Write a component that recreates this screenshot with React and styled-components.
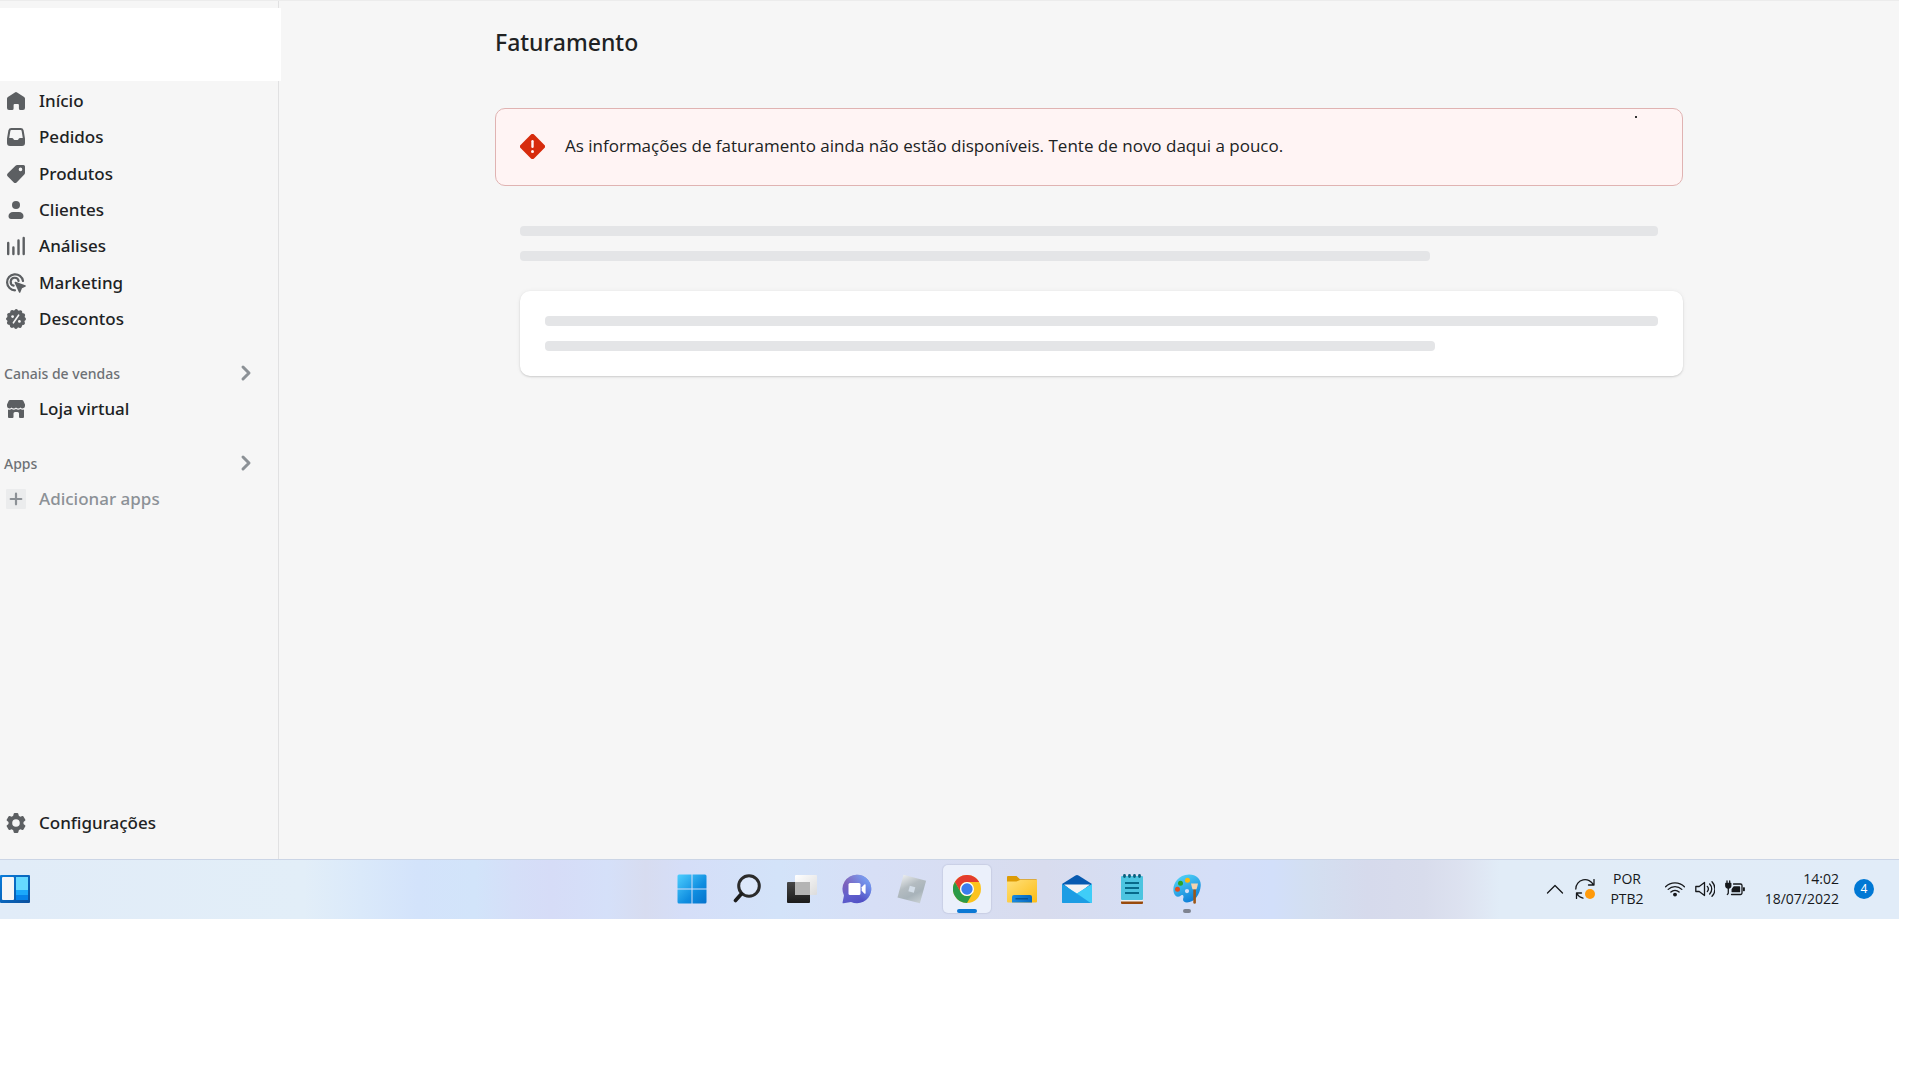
import React from 'react';
import styled, { createGlobalStyle } from 'styled-components';

const App = () => {
    return (
        <>
            <GlobalStyle />
            <Screen>
                <Desktop>
                    <Admin>
                        <Sidebar>
                            <StoreSwitcher />
                            <MainNav>
                                {MAIN_LINKS.map(({ label, icon: Icon }) => (
                                    <NavLink href="#" key={label}>
                                        <Icon />
                                        {label}
                                    </NavLink>
                                ))}
                            </MainNav>
                            <NavSection>
                                <SectionButton type="button">
                                    Canais de vendas
                                    <ChevronIcon />
                                </SectionButton>
                                <NavLink href="#">
                                    <StoreIcon />
                                    Loja virtual
                                </NavLink>
                            </NavSection>
                            <NavSection>
                                <SectionButton type="button">
                                    Apps
                                    <ChevronIcon />
                                </SectionButton>
                                <NavLink href="#" $muted>
                                    <PlusIcon />
                                    Adicionar apps
                                </NavLink>
                            </NavSection>
                            <SidebarFooter>
                                <NavLink href="#">
                                    <GearIcon />
                                    Configurações
                                </NavLink>
                            </SidebarFooter>
                        </Sidebar>
                        <Content>
                            <Page>
                                <PageTitle>Faturamento</PageTitle>
                                <Banner role="alert">
                                    <AlertIcon />
                                    <BannerText>
                                        As informações de faturamento ainda não estão disponíveis. Tente de novo daqui a pouco.
                                    </BannerText>
                                </Banner>
                                <SkeletonBody>
                                    <SkeletonText>
                                        <SkeletonLine />
                                        <SkeletonLine $short />
                                    </SkeletonText>
                                    <SkeletonCard>
                                        <SkeletonLine />
                                        <SkeletonLine $short />
                                    </SkeletonCard>
                                </SkeletonBody>
                            </Page>
                        </Content>
                    </Admin>
                    <Taskbar>
                        <WidgetButton type="button" aria-label="Widgets">
                            <WidgetsIcon />
                        </WidgetButton>
                        <TaskbarApps>
                            {TASKBAR_APPS.map(({ label, icon: Icon, active, open }) => (
                                <AppButton type="button" key={label} aria-label={label} $active={active}>
                                    <Icon />
                                    {(active || open) && <Indicator $active={active} />}
                                </AppButton>
                            ))}
                        </TaskbarApps>
                        <Tray>
                            <TrayButton type="button" aria-label="Ícones ocultos">
                                <TrayChevron />
                            </TrayButton>
                            <TrayButton type="button" aria-label="Atualização">
                                <UpdateIcon />
                            </TrayButton>
                            <Language type="button">
                                <span>POR</span>
                                <span>PTB2</span>
                            </Language>
                            <TrayButton type="button" aria-label="Rede">
                                <WifiIcon />
                            </TrayButton>
                            <TrayButton type="button" aria-label="Volume">
                                <VolumeIcon />
                            </TrayButton>
                            <TrayButton type="button" aria-label="Bateria">
                                <BatteryIcon />
                            </TrayButton>
                            <Clock type="button">
                                <span>14:02</span>
                                <span>18/07/2022</span>
                            </Clock>
                            <Notifications type="button">4</Notifications>
                        </Tray>
                    </Taskbar>
                </Desktop>
            </Screen>
        </>
    );
};

export default App;

// 사이드바 아이콘
const HomeIcon = () => (
    <Icon20 viewBox="0 0 20 20">
        <path d="M19 7.6V17a2 2 0 0 1-2 2h-2.6a1.5 1.5 0 0 1-1.5-1.5V14a1 1 0 0 0-1-1H8.6a1 1 0 0 0-1 1v3.5A1.5 1.5 0 0 1 6.1 19H3a2 2 0 0 1-2-2V7.6a2 2 0 0 1 .9-1.6l7-4.6a2 2 0 0 1 2.2 0l7 4.6A2 2 0 0 1 19 7.6z" />
    </Icon20>
);

const OrdersIcon = () => (
    <Icon20 viewBox="0 0 20 20">
        <path fillRule="evenodd" d="M5.3 1h9.4a3 3 0 0 1 2.9 2.3l1.3 7.7q.1.5.1 1V16a3 3 0 0 1-3 3H4a3 3 0 0 1-3-3v-4q0-.5.1-1l1.3-7.7A3 3 0 0 1 5.3 1zM5.4 3a1 1 0 0 0-1 .8L3.2 11H6a1.5 1.5 0 0 1 1.3.8l.3.5a1 1 0 0 0 .9.7h3a1 1 0 0 0 .9-.7l.3-.5A1.5 1.5 0 0 1 14 11h2.8l-1.2-7.2a1 1 0 0 0-1-.8z" />
    </Icon20>
);

const ProductsIcon = () => (
    <Icon20 viewBox="0 0 20 20">
        <path fillRule="evenodd" d="M11.2 1H17.5A1.5 1.5 0 0 1 19 2.5V8.8a2.5 2.5 0 0 1-.7 1.7l-7.7 7.9a2 2 0 0 1-2.8 0l-6.2-6.2a2 2 0 0 1 0-2.8l7.9-7.7A2.5 2.5 0 0 1 11.2 1zM14.5 7.2a1.8 1.8 0 1 0 0-3.6 1.8 1.8 0 0 0 0 3.6z" />
    </Icon20>
);

const CustomersIcon = () => (
    <Icon20 viewBox="0 0 20 20">
        <circle cx="10" cy="5" r="4" />
        <path d="M7 12h6c2.6 0 4.5 1.7 4.5 4 0 1.8-1 3-2.5 3H5c-1.5 0-2.5-1.2-2.5-3 0-2.3 1.9-4 4.5-4z" />
    </Icon20>
);

const AnalyticsIcon = () => (
    <Icon20 viewBox="0 0 20 20">
        <path d="M2.2 7v11M7.4 11.5V18M12.5 4.5V18M17.7 2v16" fill="none" stroke="currentColor" strokeWidth="2.4" strokeLinecap="round" />
    </Icon20>
);

const MarketingIcon = () => (
    <Icon20 viewBox="0 0 20 20">
        <path d="M9 17.3A8 8 0 1 1 17 8" fill="none" stroke="currentColor" strokeWidth="2.2" strokeLinecap="round" />
        <path d="M7.6 12.6A4 4 0 1 1 12.6 8" fill="none" stroke="currentColor" strokeWidth="2.2" strokeLinecap="round" />
        <path d="M9.6 8.8l9.7 3.4a.8.8 0 0 1 0 1.5l-3.3 1.5-1.6 4a.8.8 0 0 1-1.5 0L8.6 9.8a.8.8 0 0 1 1-1z" />
    </Icon20>
);

const DiscountsIcon = () => (
    <Icon20 viewBox="0 0 20 20">
        <circle cx="10" cy="10" r="9" />
        <circle cx="10" cy="10" r="8.3" fill="none" stroke="currentColor" strokeWidth="3.4" strokeLinecap="round" strokeDasharray="0.01 4.336" />
        <path d="M7.4 13.8l5.2-7.6" stroke="#f6f6f6" strokeWidth="1.6" strokeLinecap="round" />
        <circle cx="6.6" cy="7.6" r="1.4" fill="#f6f6f6" />
        <circle cx="13.4" cy="12.4" r="1.4" fill="#f6f6f6" />
    </Icon20>
);

const StoreIcon = () => (
    <Icon20 viewBox="0 0 20 20">
        <path d="M4 1h12a1.5 1.5 0 0 1 1.3.8L19 5.5V7a2.5 2.5 0 0 1-4.5 1.5 3 3 0 0 1-4.5 0 3 3 0 0 1-4.5 0A2.5 2.5 0 0 1 1 7V5.5l1.7-3.7A1.5 1.5 0 0 1 4 1z" />
        <path d="M2 10.5q2 .8 3.6-.4 2.2 1.5 4.4 0 2.2 1.5 4.4 0 1.6 1.2 3.6.4V18a1 1 0 0 1-1 1h-3a1 1 0 0 1-1-1v-3.5a1.5 1.5 0 0 0-1.500-1.5h-2.500A1.5 1.5 0 0 0 7.500 14.500V18a1 1 0 0 1-1 1H3a1 1 0 0 1-1-1z" />
    </Icon20>
);

const PlusIcon = () => (
    <Icon20 viewBox="0 0 20 20">
        <rect width="20" height="20" rx="1" fill="#ebeced" />
        <path d="M10 4.700v10.600M4.700 10h10.600" stroke="currentColor" strokeWidth="2.2" strokeLinecap="round" />
    </Icon20>
);

const GearIcon = () => (
    <Icon20 viewBox="0 0 20 20">
        <path fillRule="evenodd" d="M8.7 0h2.6a1 1 0 0 1 1 .8l.5 2 1.5.9 2-.6a1 1 0 0 1 1.2.4l1.700 2.900a1 1 0 0 1-.2 1.300L17.500 9.100v1.800l1.500 1.400a1 1 0 0 1 .2 1.300l-1.700 2.900a1 1 0 0 1-1.200.4l-2-.6-1.500.9-.5 2a1 1 0 0 1-1 .8H8.700a1 1 0 0 1-1-.8l-.5-2-1.500-.9-2 .6a1 1 0 0 1-1.200-.4L.8 13.600a1 1 0 0 1 .2-1.300l1.500-1.400V9.100L1 7.700a1 1 0 0 1-.2-1.300l1.700-2.900a1 1 0 0 1 1.200-.4l2 .6 1.500-.9.5-2a1 1 0 0 1 1-.8zM10 13.800a3.8 3.8 0 1 0 0-7.600 3.8 3.8 0 0 0 0 7.600z" />
    </Icon20>
);

const ChevronIcon = () => (
    <svg width="12" height="18" viewBox="0 0 12 18" fill="none" stroke="#8c9196" strokeWidth="3" strokeLinecap="round" strokeLinejoin="round" aria-hidden="true">
        <path d="M3 3l6 6-6 6" />
    </svg>
);

const AlertIcon = () => (
    <svg width="25" height="25" viewBox="0 0 25 25" aria-hidden="true">
        <path d="M10.7.8a2.5 2.5 0 0 1 3.6 0l9.9 9.900a2.5 2.5 0 0 1 0 3.600l-9.900 9.900a2.5 2.5 0 0 1-3.600 0L.8 14.300a2.5 2.5 0 0 1 0-3.600z" fill="#d72c0d" />
        <path d="M12.5 7.3v5.4" stroke="#fff4f4" strokeWidth="2.4" strokeLinecap="round" />
        <circle cx="12.5" cy="17.5" r="1.5" fill="#fff4f4" />
    </svg>
);

// 작업 표시줄 아이콘
const WidgetsIcon = () => (
    <svg width="30" height="28" viewBox="0 0 30 28" aria-hidden="true">
        <defs>
            <linearGradient id="widgetFrame" x1="0" y1="0" x2="1" y2="1">
                <stop offset="0" stopColor="#0a7ddb" />
                <stop offset="1" stopColor="#0a4f9c" />
            </linearGradient>
        </defs>
        <rect width="30" height="28" rx="1" fill="url(#widgetFrame)" />
        <rect x="2" y="2" width="12" height="23" rx="1" fill="#f6f6f6" />
        <rect x="16" y="2" width="12" height="13" fill="#66d9ff" />
        <rect x="16" y="15" width="12" height="5" fill="#1ba8fb" />
        <rect x="16" y="20" width="12" height="5" fill="#0683ea" />
    </svg>
);

const WindowsIcon = () => (
    <svg width="30" height="30" viewBox="0 0 30 30" aria-hidden="true">
        <defs>
            <linearGradient id="winTile" x1="0" y1="0" x2="30" y2="30" gradientUnits="userSpaceOnUse">
                <stop offset="0" stopColor="#4fd0ff" />
                <stop offset="0.6" stopColor="#0f8de0" />
                <stop offset="1" stopColor="#0471cb" />
            </linearGradient>
        </defs>
        <path d="M2 .5h12.500v14H.5V2A1.500 1.500 0 0 1 2 .5zM15.500.5H28A1.500 1.500 0 0 1 29.500 2v12.500h-14zM.5 15.500h14v14H2A1.500 1.500 0 0 1 .5 28zM15.500 15.500h14V28a1.500 1.500 0 0 1-1.500 1.500H15.500z" fill="url(#winTile)" />
    </svg>
);

const SearchIcon = () => (
    <svg width="28" height="30" viewBox="0 0 28 30" fill="none" strokeLinecap="round" aria-hidden="true">
        <circle cx="16" cy="12" r="10.3" fill="#e3ecfc" fillOpacity="0.6" stroke="#2b2b2b" strokeWidth="3" />
        <path d="M8.5 19.8L2.5 26.5" stroke="#1c1c1c" strokeWidth="3.6" />
    </svg>
);

const TaskViewIcon = () => (
    <svg width="30" height="30" viewBox="0 0 30 30" aria-hidden="true">
        <defs>
            <linearGradient id="taskBack" x1="0" y1="0" x2="0" y2="1">
                <stop offset="0" stopColor="#474747" />
                <stop offset="1" stopColor="#1b1b1b" />
            </linearGradient>
            <linearGradient id="taskFront" x1="0" y1="0" x2="1" y2="1">
                <stop offset="0" stopColor="#ffffff" />
                <stop offset="1" stopColor="#dcdcdc" />
            </linearGradient>
        </defs>
        <rect y="8" width="23" height="21" rx="1" fill="url(#taskBack)" />
        <rect x="8" y="1" width="22" height="20" rx="1" fill="url(#taskFront)" />
        <path d="M8 8h15v13H9a1 1 0 0 1-1-1z" fill="#b4b4b4" />
    </svg>
);

const ChatIcon = () => (
    <svg width="30" height="30" viewBox="0 0 30 30" aria-hidden="true">
        <defs>
            <linearGradient id="chatBubble" x1="0.2" y1="0.1" x2="0.7" y2="1">
                <stop offset="0" stopColor="#8661b5" />
                <stop offset="0.5" stopColor="#6361cd" />
                <stop offset="1" stopColor="#4f4fc4" />
            </linearGradient>
            <linearGradient id="chatShine" x1="1" y1="0" x2="0.4" y2="0.6">
                <stop offset="0" stopColor="#7ab0ff" />
                <stop offset="1" stopColor="#7ab0ff" stopOpacity="0" />
            </linearGradient>
        </defs>
        <path d="M15 .7a14.3 14.3 0 1 1-6 27.300L1.500 29.200a.8.8 0 0 1-.9-1L2 21.500A14.3 14.3 0 0 1 15 .7z" fill="url(#chatBubble)" />
        <path d="M15 .7a14.3 14.3 0 1 1-6 27.300L1.500 29.200a.8.8 0 0 1-.9-1L2 21.500A14.3 14.3 0 0 1 15 .7z" fill="url(#chatShine)" />
        <rect x="6.5" y="9" width="12" height="12" rx="1.5" fill="#fff" />
        <path d="M19.7 13.2l2.6-2.7q1.3-.9 1.3.6v7.8q0 1.5-1.3.6l-2.6-2.7z" fill="#fff" />
    </svg>
);

const RobloxIcon = () => (
    <svg width="30" height="30" viewBox="0 0 30 30" aria-hidden="true">
        <defs>
            <linearGradient id="robloxTile" x1="0.2" y1="0" x2="0.7" y2="1">
                <stop offset="0" stopColor="#eceeef" />
                <stop offset="0.4" stopColor="#b4bcc1" />
                <stop offset="0.7" stopColor="#a8b3ba" />
                <stop offset="1" stopColor="#c6ced2" />
            </linearGradient>
        </defs>
        <path d="M6.5.7l22.6 6.1-6.2 22.5L.5 23.4z" fill="url(#robloxTile)" />
        <path d="M12.8 11.8l5.5 1.5-1.5 5.4-5.4-1.5z" fill="#d3dde8" />
    </svg>
);

const ChromeIcon = () => (
    <svg width="28" height="28" viewBox="0 0 48 48" aria-hidden="true">
        <circle cx="24" cy="24" r="24" fill="#fcc31e" />
        <path d="M3.2 12A24 24 0 0 1 44.8 12H24a12 12 0 0 0-10.4 18z" fill="#e33b2e" />
        <path d="M3.2 12l10.4 18A12 12 0 0 0 34.4 30L24 48A24 24 0 0 1 3.2 12z" fill="#2a9a48" />
        <circle cx="24" cy="24" r="12" fill="#fff" />
        <circle cx="24" cy="24" r="9.7" fill="#3b7ded" />
    </svg>
);

const FolderIcon = () => (
    <svg width="30" height="28" viewBox="0 0 30 28" aria-hidden="true">
        <defs>
            <linearGradient id="folderFront" x1="0" y1="0" x2="1" y2="1">
                <stop offset="0" stopColor="#ffe07a" />
                <stop offset="1" stopColor="#fcbc14" />
            </linearGradient>
            <linearGradient id="folderDock" x1="0" y1="0" x2="1" y2="0">
                <stop offset="0" stopColor="#1b8ae0" />
                <stop offset="1" stopColor="#0668bd" />
            </linearGradient>
        </defs>
        <path d="M1 1h8.5L13 4.2H29q1 0 1 1V10H0V2q0-1 1-1z" fill="#dd9b05" />
        <path d="M0 6.5h9.5L13 5h17v21.5q0 1-1 1H1q-1 0-1-1z" fill="url(#folderFront)" />
        <path d="M5 27.5V22q0-2 2-2h16q2 0 2 2v5.5z" fill="url(#folderDock)" />
        <path d="M8.5 23.8h12.5" stroke="#064a87" strokeWidth="1.2" />
    </svg>
);

const MailIcon = () => (
    <svg width="30" height="28" viewBox="0 0 30 28" aria-hidden="true">
        <path d="M0 9L13.5.5q1.5-.8 3 0L30 9v6H0z" fill="#075ab0" />
        <path d="M2 9.5h26L15 20z" fill="#f4f4f5" />
        <path d="M0 9l15 9.5L30 9v18q0 1-1 1H1q-1 0-1-1z" fill="#29b4f0" />
        <path d="M30 9L15 18.5 28.5 28q1.5 0 1.5-1.5z" fill="#3fcdf8" />
        <path d="M0 9v18q0 1 1 1h27.5z" fill="#1c9de4" />
    </svg>
);

const NotepadIcon = () => (
    <svg width="22" height="30" viewBox="0 0 22 30" aria-hidden="true">
        <path d="M0 26h22v3a1 1 0 0 1-1 1H1a1 1 0 0 1-1-1z" fill="#994a0c" />
        <rect y="24" width="22" height="3.5" fill="#eeeff0" />
        <rect y="2" width="22" height="24" rx="1" fill="#4cc4e0" />
        <path d="M4 9h14M4 14h14M4 19h14" stroke="#076a8a" strokeWidth="2" />
        <path d="M3.5 1.5v1M8.5 1.5v1M13.5 1.5v1M18.5 1.5v1" stroke="#0b5e7c" strokeWidth="2.8" strokeLinecap="round" />
    </svg>
);

const PaintIcon = () => (
    <svg width="30" height="30" viewBox="0 0 30 30" aria-hidden="true">
        <defs>
            <linearGradient id="palette" x1="0.2" y1="0" x2="0.7" y2="1">
                <stop offset="0" stopColor="#53d6f8" />
                <stop offset="1" stopColor="#0b7ad6" />
            </linearGradient>
        </defs>
        <path d="M17 .6C25 .6 29.3 5.5 28.7 12c-.6 8-6 16.5-13.7 16.5-3.6 0-4.5-2-3.7-4.5.7-2.6-.5-3.7-2.3-2.6-2 1.4-3.8 2-5.7 0C-1.5 16 2.5 1 17 .6zM15 15a2.1 2.1 0 1 0 0 4.2A2.1 2.1 0 0 0 15 15z" fill="url(#palette)" fillRule="evenodd" />
        <circle cx="15.5" cy="6.3" r="2.5" fill="#fcb90a" />
        <circle cx="8.5" cy="9.3" r="2.5" fill="#2ba526" />
        <circle cx="5.5" cy="15.3" r="2.5" fill="#e04d1c" />
        <path d="M19 9.5h7l-.8 3.5q-.4 2-1.2 2.5h-3q-.8-.5-1.2-2.5z" fill="#f3d3ae" />
        <path d="M21.3 15.5h2.6v13a1.3 1.3 0 0 1-2.6 0z" fill="#9c5718" />
    </svg>
);

const TASKBAR_APPS = [
    { label: 'Iniciar', icon: WindowsIcon },
    { label: 'Pesquisar', icon: SearchIcon },
    { label: 'Visão de tarefas', icon: TaskViewIcon },
    { label: 'Chat', icon: ChatIcon },
    { label: 'Roblox', icon: RobloxIcon },
    { label: 'Google Chrome', icon: ChromeIcon, active: true },
    { label: 'Explorador de Arquivos', icon: FolderIcon },
    { label: 'Email', icon: MailIcon },
    { label: 'Bloco de Notas', icon: NotepadIcon },
    { label: 'Paint', icon: PaintIcon, open: true },
];

const TrayChevron = () => (
    <TrayIcon viewBox="0 0 20 20">
        <path d="M2.5 14L10 6.5l7.5 7.5" />
    </TrayIcon>
);

const UpdateIcon = () => (
    <TrayIcon viewBox="0 0 20 20">
        <path d="M.8 10A9.3 9.3 0 0 1 18.5 6M19 .5V6h-5.5M8 19.2A9.3 9.3 0 0 1 1.8 14.5M6.5 14H1.5v5.5" />
        <circle cx="15" cy="15" r="5" fill="#ff9a0a" stroke="none" />
    </TrayIcon>
);

const WifiIcon = () => (
    <TrayIcon viewBox="0 0 20 20">
        <path d="M.6 7.8a13.2 13.2 0 0 1 18.8 0M3.2 10.4a9.6 9.6 0 0 1 13.6 0M5.9 13a5.8 5.8 0 0 1 8.2 0" />
        <circle cx="10" cy="15.6" r="1.3" fill="#16181b" />
    </TrayIcon>
);

const VolumeIcon = () => (
    <TrayIcon viewBox="0 0 20 20">
        <path d="M.8 7.5h3.4L9.5 3.5v13l-5.3-4H.8zM12.3 7.4a4 4 0 0 1 0 5.2M14.7 5a7.2 7.2 0 0 1 0 10M17 2.7a10.5 10.5 0 0 1 0 14.6" />
    </TrayIcon>
);

const BatteryIcon = () => (
    <TrayIcon viewBox="0 0 20 20">
        <path d="M8.5 5H15.5a1.5 1.5 0 0 1 1.5 1.5v7.5a1.5 1.5 0 0 1-1.5 1.5H6.5" />
        <path d="M9 8h5.5v4.7H7.2v-2.2z" fill="#16181b" />
        <path d="M18.6 8.8h.6v2.8h-.6z" fill="#16181b" />
        <path d="M.8 4.500h5v2a2.5 2.5 0 0 1-5 0z" fill="#16181b" />
        <path d="M2 4.5V2M4.7 4.5V2M3.3 9v4.5a2 2 0 0 1-1 2" />
    </TrayIcon>
);

const MAIN_LINKS = [
    { label: 'Início', icon: HomeIcon },
    { label: 'Pedidos', icon: OrdersIcon },
    { label: 'Produtos', icon: ProductsIcon },
    { label: 'Clientes', icon: CustomersIcon },
    { label: 'Análises', icon: AnalyticsIcon },
    { label: 'Marketing', icon: MarketingIcon },
    { label: 'Descontos', icon: DiscountsIcon },
];

const GlobalStyle = createGlobalStyle`
  body {
    margin: 0;
    background-color: #ffffff;
    color: #202223;
    font-family: 'Noto Sans', 'Open Sans', sans-serif;
  }

  button {
    padding: 0;
    border: none;
    background: none;
    color: inherit;
    font-family: inherit;
    cursor: pointer;
  }
`;

const Screen = styled.div`
  display: flex;
  flex-direction: column;
  min-height: 100vh;
  padding: 0 21px 161px 0;
  box-sizing: border-box;
`;

const Desktop = styled.div`
  display: flex;
  flex-direction: column;
  flex: 1;
`;

const Admin = styled.div`
  display: flex;
  flex: 1;
  background-color: #f6f6f6;
  border-top: 1px solid #ececec;
`;

// 사이드바 스타일링
const Sidebar = styled.nav`
  display: flex;
  flex-direction: column;
  gap: 18px;
  flex: none;
  width: 279px;
  padding: 7px 0 18px;
  border-right: 1px solid #e1e1e2;
  box-sizing: border-box;
`;

const StoreSwitcher = styled.div`
  flex: none;
  height: 73px;
  margin-right: -3px;
  margin-bottom: -16px;
  background-color: #ffffff;
`;

const MainNav = styled.div`
  display: grid;
  grid-auto-rows: 1fr;
  height: 254px;
`;

const NavSection = styled.div`
  display: flex;
  flex-direction: column;
`;

const SidebarFooter = styled.div`
  margin-top: auto;
`;

const NavLink = styled.a`
  display: flex;
  align-items: center;
  gap: 13px;
  min-height: 36px;
  padding-left: 6px;
  font-size: 17px;
  font-weight: 500;
  line-height: 24px;
  color: ${({ $muted }) => ($muted ? '#8c9196' : '#202223')};
  text-decoration: none;

  svg {
    color: ${({ $muted }) => ($muted ? '#8c9196' : '#5c5f62')};
  }
`;

const SectionButton = styled.button`
  display: flex;
  align-items: center;
  justify-content: space-between;
  height: 36px;
  padding: 0 26px 0 4px;
  font-size: 14px;
  font-weight: 500;
  color: #6d7175;
`;

const Icon20 = styled.svg.attrs({ 'aria-hidden': true })`
  flex: none;
  width: 20px;
  height: 20px;
  fill: currentColor;
`;

// 본문 스타일링
const Content = styled.main`
  flex: 1;
  min-width: 0;
  padding: 0 24px;
`;

const Page = styled.div`
  max-width: 1188px;
  margin: 0 auto;
`;

const PageTitle = styled.h1`
  margin: 0;
  padding: 24px 0 48px;
  font-size: 23px;
  font-weight: 500;
  line-height: 35px;
`;

const Banner = styled.div`
  position: relative;
  display: flex;
  align-items: center;
  gap: 20px;
  min-height: 78px;
  padding: 0 24px 2px;
  border: 1px solid #e0b3b2;
  border-radius: 10px;
  background-color: #fff4f4;
  box-sizing: border-box;

  &::after {
    content: '';
    position: absolute;
    top: 7px;
    right: 45px;
    width: 2px;
    height: 2px;
    background-color: #333333;
  }
`;

const BannerText = styled.p`
  margin: 0;
  font-family: 'Open Sans', 'Noto Sans', sans-serif;
  font-size: 17px;
  line-height: 24px;
`;

const SkeletonBody = styled.div`
  display: flex;
  flex-direction: column;
  gap: 30px;
  padding: 40px 0 0 25px;
`;

const SkeletonText = styled.div`
  display: flex;
  flex-direction: column;
  gap: 15px;
  padding-right: 25px;
`;

const SkeletonCard = styled.div`
  display: flex;
  flex-direction: column;
  gap: 15px;
  padding: 25px;
  border-radius: 10px;
  background-color: #ffffff;
  box-shadow: 0 0 5px rgba(23, 24, 24, 0.05), 0 1px 2px rgba(0, 0, 0, 0.15);
`;

const SkeletonLine = styled.div`
  width: ${({ $short }) => ($short ? '80%' : '100%')};
  height: 10px;
  border-radius: 4px;
  background-color: #e4e5e7;
`;

// 작업 표시줄 스타일링
const Taskbar = styled.footer`
  display: grid;
  grid-template-columns: 1fr auto 1fr;
  align-items: center;
  height: 60px;
  padding: 0 20px 1px 0;
  border-top: 1px solid #cbd5e6;
  background: linear-gradient(
    90deg,
    #e1ecf8 0%,
    #e2eef8 16%,
    #dae9fa 19%,
    #d3e3fb 22%,
    #d2e4fa 25%,
    #d5dff8 27%,
    #d6dcf7 29%,
    #d5e0f9 32%,
    #d7dcf0 34%,
    #d5def8 36%,
    #d3e3f9 41%,
    #d7dff6 46%,
    #d8dcee 55%,
    #d5def4 60%,
    #d5dff8 64%,
    #d2dffa 67%,
    #d3dff1 69%,
    #d6daec 72%,
    #d8dcec 75%,
    #dde2f0 77%,
    #e1ecf7 79%,
    #e1ecf8 100%
  );
  box-sizing: border-box;
`;

const WidgetButton = styled.button`
  display: flex;
  justify-self: start;
`;

const TaskbarApps = styled.div`
  display: flex;
  gap: 7px;
`;

const AppButton = styled.button`
  position: relative;
  display: flex;
  align-items: center;
  justify-content: center;
  width: 48px;
  height: 48px;
  border-radius: 5px;
  background-color: ${({ $active }) => ($active ? '#ebf0fb' : 'transparent')};
  box-shadow: ${({ $active }) => ($active ? '0 0 1px 1px rgba(120, 130, 160, 0.15)' : 'none')};
`;

const Indicator = styled.span`
  position: absolute;
  bottom: 0;
  left: 50%;
  width: ${({ $active }) => ($active ? '20px' : '8px')};
  height: 4px;
  border-radius: 2px;
  background-color: ${({ $active }) => ($active ? '#0b78d4' : '#7e8390')};
  transform: translateX(-50%);
`;

const Tray = styled.div`
  display: flex;
  align-items: center;
  justify-self: end;
  gap: 10px;
  padding-right: 5px;
  color: #16181b;
`;

const TrayButton = styled.button`
  display: flex;
`;

const TrayIcon = styled.svg.attrs({ 'aria-hidden': true })`
  width: 20px;
  height: 20px;
  fill: none;
  stroke: #16181b;
  stroke-width: 1.3px;
  stroke-linecap: round;
  stroke-linejoin: round;
`;

const Language = styled.button`
  display: flex;
  flex-direction: column;
  align-items: center;
  width: 44px;
  margin: 0 6px 0 0;
  font-family: 'Open Sans', 'Noto Sans', sans-serif;
  font-size: 14px;
  line-height: 20px;
`;

const Clock = styled(Language)`
  align-items: flex-end;
  width: 84px;
  margin: 0 5px 0 0;
`;

const Notifications = styled.button`
  width: 20px;
  height: 20px;
  border-radius: 50%;
  background-color: #0078d4;
  color: #ffffff;
  font-size: 12px;
  line-height: 20px;
`;
